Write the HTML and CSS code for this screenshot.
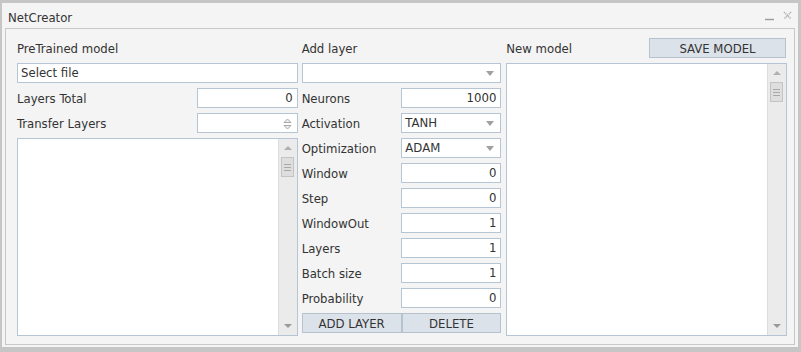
FILE: index.html
```html
<!DOCTYPE html>
<html lang="en">

<head>
  <meta charset="utf-8" />
  <title>NetCreator</title>
  <link rel="stylesheet" href="styles.css">
</head>

<body>
  <div class="ventana">
    <div class="titulo">
      <span>NetCreator</span>
      <div class="controles">
        <svg width="10" height="10" viewBox="0 0 10 10"><path d="M0 8.5h9" stroke="#9a9a9a" stroke-width="1.4" /></svg>
        <svg width="9" height="9" viewBox="0 0 9 9"><path d="M1 1l7 7M8 1l-7 7" stroke="#b0b0b0" stroke-width="1.6" stroke-dasharray="1.2 0.8" /></svg>
      </div>
    </div>

    <div class="cliente">
      <div class="columna izquierda">
        <div class="fila"><span class="etiqueta">PreTrained model</span></div>
        <div class="campo texto">Select file</div>
        <div class="fila">
          <span class="etiqueta">Layers Total</span>
          <div class="campo numero">0</div>
        </div>
        <div class="fila">
          <span class="etiqueta">Transfer Layers</span>
          <div class="campo numero spin">
            <svg class="flechas" width="9" height="14" viewBox="0 0 9 14">
              <path d="M1 5.5L4.5 2L8 5.5z" fill="#f0f0f0" stroke="#a8a8a8" />
              <path d="M1 8.5L4.5 12L8 8.5z" fill="#f0f0f0" stroke="#a8a8a8" />
            </svg>
          </div>
        </div>
        <div class="lista">
          <div class="barra">
            <span class="arriba"></span>
            <span class="pulgar"><i></i><i></i><i></i></span>
            <span class="relleno"></span>
            <span class="abajo"></span>
          </div>
        </div>
      </div>

      <div class="columna centro">
        <div class="fila"><span class="etiqueta">Add layer</span></div>
        <div class="campo combo"><span></span><b class="triangulo"></b></div>
        <div class="fila">
          <span class="etiqueta">Neurons</span>
          <div class="campo numero">1000</div>
        </div>
        <div class="fila">
          <span class="etiqueta">Activation</span>
          <div class="campo combo"><span>TANH</span><b class="triangulo"></b></div>
        </div>
        <div class="fila">
          <span class="etiqueta">Optimization</span>
          <div class="campo combo"><span>ADAM</span><b class="triangulo"></b></div>
        </div>
        <div class="fila">
          <span class="etiqueta">Window</span>
          <div class="campo numero">0</div>
        </div>
        <div class="fila">
          <span class="etiqueta">Step</span>
          <div class="campo numero">0</div>
        </div>
        <div class="fila">
          <span class="etiqueta">WindowOut</span>
          <div class="campo numero">1</div>
        </div>
        <div class="fila">
          <span class="etiqueta">Layers</span>
          <div class="campo numero">1</div>
        </div>
        <div class="fila">
          <span class="etiqueta">Batch size</span>
          <div class="campo numero">1</div>
        </div>
        <div class="fila">
          <span class="etiqueta">Probability</span>
          <div class="campo numero">0</div>
        </div>
        <div class="botones">
          <button type="button" class="boton">ADD LAYER</button>
          <button type="button" class="boton">DELETE</button>
        </div>
      </div>

      <div class="columna derecha">
        <div class="fila">
          <span class="etiqueta">New model</span>
          <button type="button" class="boton guardar">SAVE MODEL</button>
        </div>
        <div class="lista">
          <div class="barra">
            <span class="arriba"></span>
            <span class="pulgar"><i></i><i></i><i></i></span>
            <span class="relleno"></span>
            <span class="abajo"></span>
          </div>
        </div>
      </div>
    </div>
  </div>
</body>

</html>
```

FILE: styles.css
```css
body {
  margin: 0;
  background-color: #c6c6c6;
  font-family: "DejaVu Sans Condensed", "DejaVu Sans", sans-serif;
  font-stretch: condensed;
  font-size: 13px;
  color: #333;
}

.ventana {
  margin: 3px 3px 5px 2px;
  height: 344px;
  background-color: #f4f4f4;
  display: flex;
  flex-direction: column;
}

.titulo {
  height: 25px;
  display: flex;
  align-items: center;
  justify-content: space-between;
  padding: 0 6px 0 6px;
}

.titulo span {
  padding-top: 3px;
}

.controles {
  display: flex;
  gap: 8px;
  align-items: center;
}

.cliente {
  margin: 0 3px 2px 3px;
  flex: 1;
  border: 1px solid #c8c8c8;
  padding: 9px 7px 8px 11px;
  display: flex;
}

.columna {
  display: flex;
  flex-direction: column;
  gap: 5px;
}

.izquierda {
  width: 281px;
  margin-right: 4px;
}

.centro {
  width: 200px;
  margin-right: 5px;
}

.derecha {
  width: 281px;
}

.fila {
  height: 20px;
  display: flex;
  align-items: center;
  justify-content: space-between;
}

.campo {
  height: 18px;
  box-sizing: content-box;
  border: 1px solid #b6c5d3;
  background-color: #fff;
  display: flex;
  align-items: center;
  line-height: 18px;
}

.texto {
  padding-left: 3px;
}

.numero {
  width: 94px;
  justify-content: flex-end;
  padding-right: 4px;
}

.izquierda .numero {
  width: 95px;
}

.spin {
  position: relative;
}

.flechas {
  position: absolute;
  right: 5px;
  top: 3px;
}

.combo {
  padding: 0 6px 0 3px;
  justify-content: space-between;
}

.fila .combo {
  width: 89px;
}

.triangulo {
  width: 0;
  height: 0;
  border-left: 4px solid transparent;
  border-right: 4px solid transparent;
  border-top: 5px solid #a0a0a0;
}

.lista {
  flex: 1;
  border: 1px solid #b6c5d3;
  background-color: #fff;
  display: flex;
  justify-content: flex-end;
}

.barra {
  width: 18px;
  background-color: #ebebeb;
  border-left: 1px solid #dcdcdc;
  display: flex;
  flex-direction: column;
  align-items: center;
}

.arriba,
.abajo {
  height: 18px;
  width: 100%;
  display: flex;
  align-items: center;
  justify-content: center;
}

.arriba::after {
  content: "";
  border-left: 4px solid transparent;
  border-right: 4px solid transparent;
  border-bottom: 4px solid #b0b0b0;
}

.abajo::after {
  content: "";
  border-left: 4px solid transparent;
  border-right: 4px solid transparent;
  border-top: 4px solid #9a9a9a;
}

.pulgar {
  width: 13px;
  height: 20px;
  box-sizing: border-box;
  border: 1px solid #c4c4c4;
  background-color: #dedede;
  display: flex;
  flex-direction: column;
  justify-content: center;
  align-items: center;
  gap: 2px;
}

.pulgar i {
  display: block;
  width: 7px;
  height: 1px;
  background-color: #a8a8a8;
}

.relleno {
  flex: 1;
}

.botones {
  display: flex;
  height: 20px;
}

.boton {
  flex: 1;
  height: 20px;
  margin: 0;
  padding: 0;
  border: 1px solid #b6c3cf;
  background-color: #dce2e9;
  font: inherit;
  color: #333;
}

.guardar {
  flex: none;
  width: 137px;
  margin-right: 1px;
}
```
